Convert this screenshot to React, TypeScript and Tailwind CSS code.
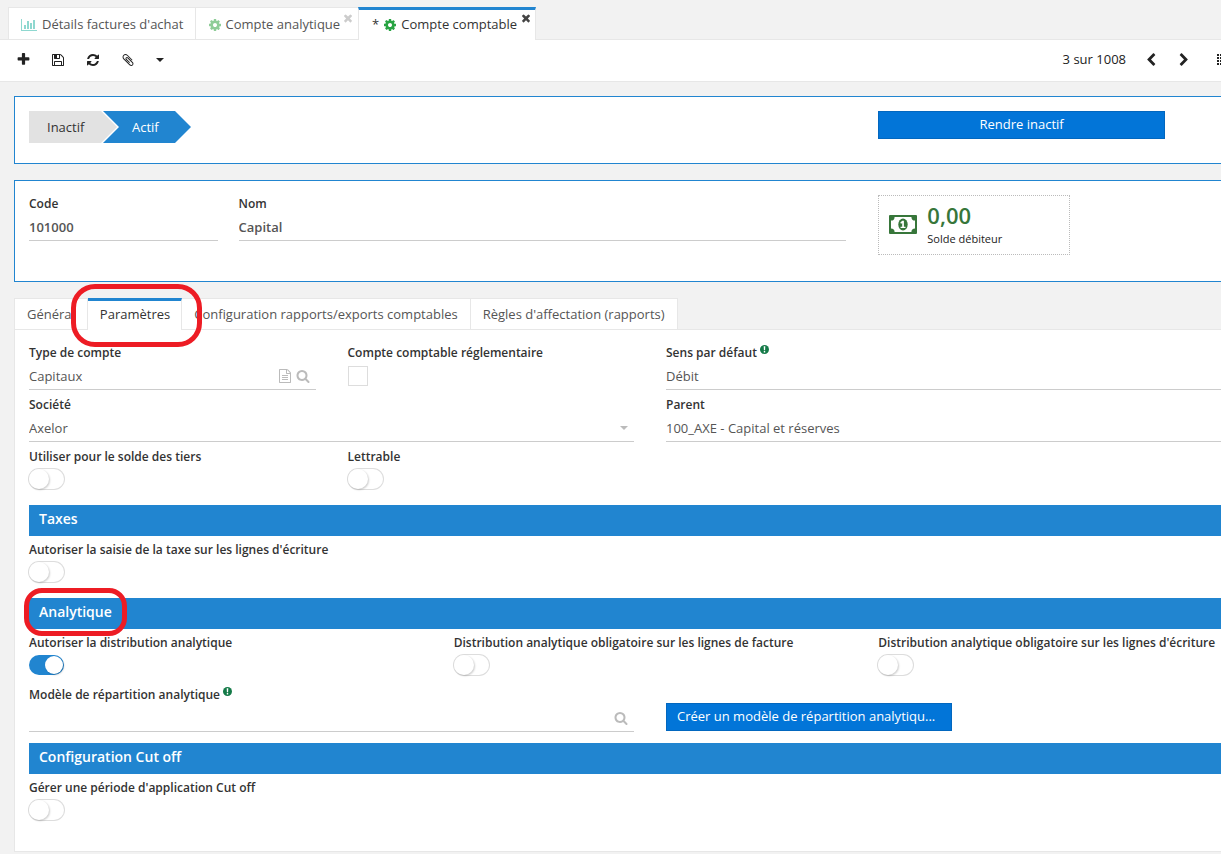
import { useState } from 'react';
import type { ReactNode } from 'react';

const PATHS = {
  plus: 'M1600 736v192q0 40-28 68t-68 28h-416v416q0 40-28 68t-68 28h-192q-40 0-68-28t-28-68v-416h-416q-40 0-68-28t-28-68v-192q0-40 28-68t68-28h416v-416q0-40 28-68t68-28h192q40 0 68 28t28 68v416h416q40 0 68 28t28 68z',
  save: 'M512 1536h768v-384h-768v384zm896 0h128v-896q0-14-10-38.5t-20-34.5l-281-281q-10-10-34-20t-39-10v416q0 40-28 68t-68 28h-576q-40 0-68-28t-28-68v-416h-128v1280h128v-416q0-40 28-68t68-28h832q40 0 68 28t28 68v416zm-384-928v-320q0-13-9.5-22.5t-22.5-9.5h-192q-13 0-22.5 9.5t-9.5 22.5v320q0 13 9.5 22.5t22.5 9.5h192q13 0 22.5-9.5t9.5-22.5zm640 32v928q0 40-28 68t-68 28h-1344q-40 0-68-28t-28-68v-1344q0-40 28-68t68-28h928q40 0 88 20t76 48l280 280q28 28 48 76t20 88z',
  refresh: 'M1639 1056q0 5-1 7-64 268-268 434.5t-478 166.5q-146 0-282.5-55t-243.5-157l-129 129q-19 19-45 19t-45-19-19-45v-448q0-26 19-45t45-19h448q26 0 45 19t19 45-19 45l-137 137q71 66 161 102t187 36q134 0 250-65t186-179q11-17 53-117 8-23 30-23h192q13 0 22.5 9.5t9.5 22.5zm25-800v448q0 26-19 45t-45 19h-448q-26 0-45-19t-19-45 19-45l138-138q-148-137-349-137-134 0-250 65t-186 179q-11 17-53 117-8 23-30 23h-199q-13 0-22.5-9.5t-9.5-22.5v-7q65-268 270-434.5t480-166.5q146 0 284 55.5t245 156.5l130-129q19-19 45-19t45 19 19 45z',
  clip: 'M1596 1385q0 117-79 196t-196 79q-135 0-235-100l-777-776q-113-115-113-271 0-159 110-270t269-111q158 0 273 113l605 606q10 10 10 22 0 16-30.5 46.5t-46.5 30.5q-13 0-23-10l-606-607q-79-77-181-77-106 0-179 75t-73 181q0 105 76 181l776 777q63 63 145 63 64 0 106-42t42-106q0-82-63-145l-581-581q-26-24-60-24-29 0-48 19t-19 48q0 32 25 59l410 410q10 10 10 22 0 16-31 47t-47 31q-12 0-22-10l-410-410q-63-61-63-149 0-82 57-139t139-57q88 0 149 63l581 581q100 98 100 235z',
  search: 'M1216 832q0-185-131.5-316.5t-316.5-131.5-316.5 131.5-131.5 316.5 131.5 316.5 316.5 131.5 316.5-131.5 131.5-316.5zm512 832q0 52-38 90t-90 38q-54 0-90-38l-343-342q-179 124-399 124-143 0-273.5-55.5t-225-150-150-225-55.5-273.5 55.5-273.5 150-225 225-150 273.5-55.5 273.5 55.5 225 150 150 225 55.5 273.5q0 220-124 399l343 343q37 37 37 90z',
  file: 'M1596 380q28 28 48 76t20 88v1152q0 40-28 68t-68 28h-1344q-40 0-68-28t-28-68v-1600q0-40 28-68t68-28h896q40 0 88 20t76 48zm-444-244v376h376q-10-29-22-41l-313-313q-12-12-41-22zm384 1528v-1024h-416q-40 0-68-28t-28-68v-416h-768v1536h1280zm-1024-864q0-14 9-23t23-9h704q14 0 23 9t9 23v64q0 14-9 23t-23 9h-704q-14 0-23-9t-9-23v-64zm736 224q14 0 23 9t9 23v64q0 14-9 23t-23 9h-704q-14 0-23-9t-9-23v-64q0-14 9-23t23-9h704zm0 256q14 0 23 9t9 23v64q0 14-9 23t-23 9h-704q-14 0-23-9t-9-23v-64q0-14 9-23t23-9h704z',
  times: 'M1490 1322q0 40-28 68l-136 136q-28 28-68 28t-68-28l-294-294-294 294q-28 28-68 28t-68-28l-136-136q-28-28-28-68t28-68l294-294-294-294q-28-28-28-68t28-68l136-136q28-28 68-28t68 28l294 294 294-294q28-28 68-28t68 28l136 136q28 28 28 68t-28 68l-294 294 294 294q28 28 28 68z',
  cog: 'M1152 896q0-106-75-181t-181-75-181 75-75 181 75 181 181 75 181-75 75-181zm512-109v222q0 12-8 23t-20 13l-185 28q-19 54-39 91 35 50 107 138 10 12 10 25t-9 23q-27 37-99 108t-94 71q-12 0-26-9l-138-108q-44 23-91 38-16 136-29 186-7 28-36 28h-222q-14 0-24.5-8.5t-11.5-21.5l-28-184q-49-16-90-37l-141 107q-10 9-25 9-14 0-25-11-126-114-165-168-7-10-7-23 0-12 8-23 15-21 51-66.5t54-70.5q-27-50-41-99l-183-27q-13-2-21-12.5t-8-23.5v-222q0-12 8-23t19-13l186-28q14-46 39-92-40-57-107-138-10-12-10-24 0-10 9-23 26-36 98.5-107.5t94.5-71.5q13 0 26 10l138 107q44-23 91-38 16-136 29-186 7-28 36-28h222q14 0 24.5 8.5t11.5 21.5l28 184q49 16 90 37l142-107q9-9 24-9 13 0 25 10 129 119 165 170 7 8 7 22 0 12-8 23-15 21-51 66.5t-54 70.5q26 50 41 98l183 28q13 2 21 12.5t8 23.5z',
  left: 'M1427 301l-531 531 531 531q19 19 19 45t-19 45l-166 166q-19 19-45 19t-45-19l-742-742q-19-19-19-45t19-45l742-742q19-19 45-19t45 19l166 166q19 19 19 45t-19 45z',
  right: 'M1363 877l-742 742q-19 19-45 19t-45-19l-166-166q-19-19-19-45t19-45l531-531-531-531q-19-19-19-45t19-45l166-166q19-19 45-19t45 19l742 742q19 19 19 45t-19 45z',
};

function Icon({ name, className }: { name: keyof typeof PATHS; className: string }) {
  return (
    <svg viewBox="0 0 1792 1792" fill="currentColor" aria-hidden="true" className={`block shrink-0 ${className}`}>
      <path d={PATHS[name]} />
    </svg>
  );
}

function ChartIcon() {
  return (
    <svg viewBox="0 0 2048 1792" fill="currentColor" aria-hidden="true" className="block h-[14px] w-4 shrink-0 text-[#8fd8d0]">
      <path d="M640 896v512h-256v-512h256zm384-512v1024h-256v-1024h256zm1024 1152v128h-2048v-1536h128v1408h1920zm-640-896v768h-256v-768h256zm384-384v1152h-256v-1152h256z" />
    </svg>
  );
}

function MoneyIcon() {
  return (
    <svg viewBox="0 0 28 19" aria-hidden="true" className="mb-0.5 block h-[19px] w-7 shrink-0 text-[#37763a]">
      <path
        fill="currentColor"
        fillRule="evenodd"
        d="M1 0h26q1 0 1 1v17q0 1-1 1H1q-1 0-1-1V1q0-1 1-1zM5.600 1.900Q5.600 5.500 2 5.500V13.500Q5.600 13.500 5.600 17.100H22.400Q22.400 13.500 26 13.500V5.500Q22.400 5.500 22.400 1.900z"
      />
      <ellipse cx="14" cy="9.500" rx="4.700" ry="5.900" fill="currentColor" />
      <path fill="#fff" d="M13.200 5.800h1.700v6h1.600v1.300h-4.900v-1.300h1.600V7.900l-1.100.9-.9-1z" />
    </svg>
  );
}

function HelpMark() {
  return (
    <svg viewBox="0 0 9 9" aria-hidden="true" className="mb-2 ml-[3px] inline-block size-[9px]">
      <circle cx="4.500" cy="4.500" r="4.500" fill="#147a48" />
      <path d="M3.700 1.300h1.600l-.2 3.900H3.900zM3.800 6.100h1.400v1.300H3.800z" fill="#fff" />
    </svg>
  );
}

function Caret({ className }: { className: string }) {
  return (
    <svg viewBox="0 0 8 4" fill="currentColor" aria-hidden="true" className={`block h-1 w-2 shrink-0 ${className}`}>
      <path d="M0 0h8L4 4z" />
    </svg>
  );
}

function FieldLabel({ id, text, help }: { id: string; text: string; help?: boolean }) {
  return (
    <label htmlFor={id} className="block h-5 text-xs leading-[22px] font-semibold whitespace-nowrap text-[#333]">
      {text}
      {help && <HelpMark />}
    </label>
  );
}

type TextFieldProps = {
  id: string;
  label: string;
  value: string;
  className: string;
  strong?: boolean;
  help?: boolean;
  children?: ReactNode;
};

function TextField({ id, label, value, className, strong, help, children }: TextFieldProps) {
  return (
    <div className={`mb-1 min-w-0 ${className}`}>
      <FieldLabel id={id} text={label} help={help} />
      <div className="flex h-7 items-center gap-1 border-b border-[#ccc] pr-1.5">
        <input
          id={id}
          type="text"
          defaultValue={value}
          className={`h-full min-w-0 flex-1 bg-transparent text-[13px] outline-none ${strong ? 'font-semibold text-[#555]' : 'text-[#555]'}`}
        />
        {children}
      </div>
    </div>
  );
}

function Toggle({ id, label, className, on }: { id: string; label: string; className: string; on?: boolean }) {
  const [checked, setChecked] = useState(Boolean(on));
  return (
    <div className={`mb-1 min-w-0 ${className}`}>
      <FieldLabel id={id} text={label} />
      <div className="h-7 pt-[3px]">
        <input
          id={id}
          type="checkbox"
          role="switch"
          checked={checked}
          onChange={() => setChecked(!checked)}
          className="block h-5 w-[35px] cursor-pointer appearance-none rounded-full bg-white ring-1 ring-[#ddd] before:block before:size-5 before:rounded-full before:bg-white before:shadow-[1px_1px_2px_rgba(0,0,0,0.2)] checked:bg-[#2185d0] checked:px-px checked:ring-0 checked:before:mt-px checked:before:ml-[15px] checked:before:size-[18px]"
        />
      </div>
    </div>
  );
}

function SectionBar({ children }: { children: ReactNode }) {
  return (
    <h2 className="col-span-12 mt-[7px] mb-[3px] h-[31px] bg-[#2185d0] pl-2.5 text-sm leading-7 font-semibold text-white">
      {children}
    </h2>
  );
}

function FormTab({ label, first }: { label: string; first?: boolean }) {
  return (
    <button
      type="button"
      role="tab"
      aria-selected="false"
      className={`h-8 border-y border-r border-[#e7e7e7] bg-white px-3 pt-0.5 text-[13px] whitespace-nowrap text-[#555] ${first ? 'border-l' : ''}`}
    >
      {label}
    </button>
  );
}

const PRIMARY = 'h-7 border border-[#0267bf] bg-[#0275d8] px-2.5 text-[13px] text-white';

export default function App() {
  return (
    <div className="min-h-screen overflow-x-hidden bg-[#f2f2f2] font-['Open_Sans',sans-serif] text-[13px] text-[#333]">
      <nav className="flex h-10 items-end border-b border-[#e7e7e7] pl-2" aria-label="Onglets">
        <a href="#factures" className="flex h-8 items-center gap-[5px] border border-b-0 border-[#e7e7e7] bg-white px-3 pt-0.5 text-[#555]">
          <ChartIcon />
          Détails factures d'achat
        </a>
        <a href="#analytique" className="relative flex h-8 items-center gap-[3px] border-t border-[#e7e7e7] bg-white pt-0.5 pr-[18px] pl-3 text-[#555]">
          <Icon name="cog" className="size-[14px] text-[#8fcd98]" />
          Compte analytique
          <Icon name="times" className="absolute top-1 right-1 size-3 text-[#ccc]" />
        </a>
        <a
          href="#comptable"
          aria-current="page"
          className="relative -mb-px flex h-[33px] items-center gap-1 border-x border-t-3 border-x-[#e7e7e7] border-t-[#2185d0] bg-white pr-[18px] pl-[13px] text-[#333]"
        >
          <span>*</span>
          <Icon name="cog" className="size-[14px] text-[#28a443]" />
          Compte comptable
          <Icon name="times" className="absolute top-0.5 right-[3px] size-3 text-[#444]" />
        </a>
      </nav>

      <div className="flex h-[42px] items-center border-b border-[#e7e7e7] bg-white pb-0.5 text-[#222]">
        <div className="flex flex-1 items-center gap-5 pl-4">
          <button type="button" aria-label="Nouveau" className="size-[15px]">
            <Icon name="plus" className="size-[15px]" />
          </button>
          <button type="button" aria-label="Enregistrer" className="size-[15px]">
            <Icon name="save" className="size-[14px]" />
          </button>
          <button type="button" aria-label="Rafraîchir" className="size-[15px]">
            <Icon name="refresh" className="size-[14px]" />
          </button>
          <button type="button" aria-label="Pièces jointes" className="size-[15px]">
            <Icon name="clip" className="size-[14px]" />
          </button>
          <button type="button" aria-label="Plus d'actions">
            <Caret className="" />
          </button>
        </div>
        <span className="mr-[18px]">3 sur 1008</span>
        <button type="button" aria-label="Précédent" className="mr-[19px]">
          <Icon name="left" className="size-[14px]" />
        </button>
        <button type="button" aria-label="Suivant" className="mr-[26px]">
          <Icon name="right" className="size-[14px]" />
        </button>
        <button type="button" aria-label="Vues">
          <svg viewBox="0 0 4 11" fill="currentColor" aria-hidden="true" className="block h-[11px] w-1">
            <path d="M0 0h2v2H0zM0 3h2v2H0zM0 6h2v2H0zM0 9h2v2H0zM3 0h1v2H3zM3 3h1v2H3zM3 6h1v2H3zM3 9h1v2H3z" />
          </svg>
        </button>
      </div>

      <main className="min-w-[1300px] px-3.5 pt-3.5">
        <section className="grid h-[68px] grid-cols-12 gap-x-8 border border-[#2185d0] bg-white p-3.5">
          <ol className="col-span-8 flex">
            <li className="h-8 w-[88px] bg-[#e2e2e2] pl-[18px] leading-8 [clip-path:polygon(0_0,72px_0,100%_50%,72px_100%,0_100%)]">
              Inactif
            </li>
            <li className="-ml-3.5 h-8 w-[88px] bg-[#2185d0] pl-[29px] leading-8 text-white [clip-path:polygon(0_0,72px_0,100%_50%,72px_100%,0_100%,16px_50%)]">
              Actif
            </li>
          </ol>
          <button type="button" className={`col-span-3 ${PRIMARY}`}>
            Rendre inactif
          </button>
        </section>

        <section className="mt-4 grid h-[102px] grid-cols-12 gap-x-8 border border-[#2185d0] bg-white px-3.5 pt-3">
          <div className="col-span-8 grid grid-cols-12 content-start gap-x-[21px]">
            <TextField id="code" label="Code" value="101000" strong className="col-span-3" />
            <TextField id="nom" label="Nom" value="Capital" strong className="col-span-9" />
          </div>
          <div className="col-span-4 pt-0.5">
            <div className="flex h-[60px] w-48 items-center gap-2.5 border border-dotted border-[#bbb] pl-2.5">
              <MoneyIcon />
              <div>
                <div className="text-[22px] leading-7 font-semibold text-[#37763a]">0,00</div>
                <div className="text-[11px] leading-5 text-[#222]">Solde débiteur</div>
              </div>
            </div>
          </div>
        </section>

        <div role="tablist" className="mt-4 flex">
          <FormTab label="Général" first />
          <div className="relative">
            <button
              type="button"
              role="tab"
              aria-selected="true"
              className="h-8 border-t-3 border-r border-t-[#2185d0] border-r-[#e7e7e7] bg-white pr-[11px] pb-0.5 pl-3 text-[13px] text-[#333]"
            >
              Paramètres
            </button>
            <div className="pointer-events-none absolute -top-3.5 -right-5 -bottom-[17px] -left-[17px] z-10 rounded-3xl border-5 border-[#ed1c24]" />
          </div>
          <FormTab label="Configuration rapports/exports comptables" />
          <FormTab label="Règles d'affectation (rapports)" />
          <div className="flex-1 border-b border-[#e7e7e7]" />
        </div>

        <section className="grid grid-cols-12 gap-x-8 border border-t-0 border-[#e7e7e7] bg-white px-3.5 pt-3 pb-[22px]">
          <TextField id="type" label="Type de compte" value="Capitaux" className="col-span-3">
            <button type="button" aria-label="Ouvrir">
              <Icon name="file" className="size-[14px] text-[#bbb]" />
            </button>
            <button type="button" aria-label="Rechercher">
              <Icon name="search" className="size-[14px] text-[#bbb]" />
            </button>
          </TextField>
          <div className="col-span-3">
            <FieldLabel id="reglementaire" text="Compte comptable réglementaire" />
            <input id="reglementaire" type="checkbox" className="mt-1 block size-5 appearance-none border border-[#ddd] bg-white checked:bg-[#2185d0]" />
          </div>
          <div className="col-span-6 mb-1">
            <FieldLabel id="sens" text="Sens par défaut" help />
            <select id="sens" className="block h-7 w-full appearance-none border-b border-[#ccc] bg-transparent pt-0.5 text-[13px] text-[#555] outline-none">
              <option>Débit</option>
              <option>Crédit</option>
            </select>
          </div>

          <TextField id="societe" label="Société" value="Axelor" className="col-span-6">
            <Caret className="text-[#bbb]" />
          </TextField>
          <TextField id="parent" label="Parent" value="100_AXE - Capital et réserves" className="col-span-6" />

          <Toggle id="solde" label="Utiliser pour le solde des tiers" className="col-span-3" />
          <Toggle id="lettrable" label="Lettrable" className="col-span-9" />

          <SectionBar>Taxes</SectionBar>
          <Toggle id="taxe" label="Autoriser la saisie de la taxe sur les lignes d'écriture" className="col-span-12" />

          <SectionBar>
            <span className="relative">
              Analytique
              <span className="pointer-events-none absolute -top-3.5 -right-[15px] -bottom-[15px] -left-[15px] z-10 rounded-[18px] border-5 border-[#ed1c24]" />
            </span>
          </SectionBar>
          <Toggle id="distribution" label="Autoriser la distribution analytique" className="col-span-4" on />
          <Toggle id="facture" label="Distribution analytique obligatoire sur les lignes de facture" className="col-span-4" />
          <Toggle id="ecriture" label="Distribution analytique obligatoire sur les lignes d'écriture" className="col-span-4" />
          <TextField id="modele" label="Modèle de répartition analytique" value="" help className="col-span-6">
            <button type="button" aria-label="Rechercher un modèle">
              <Icon name="search" className="size-[14px] text-[#bbb]" />
            </button>
          </TextField>
          <button type="button" className={`col-span-3 mt-[19px] truncate text-left ${PRIMARY}`}>
            Créer un modèle de répartition analytiqu...
          </button>

          <SectionBar>Configuration Cut off</SectionBar>
          <Toggle id="cutoff" label="Gérer une période d'application Cut off" className="col-span-12" />
        </section>
      </main>
    </div>
  );
}
